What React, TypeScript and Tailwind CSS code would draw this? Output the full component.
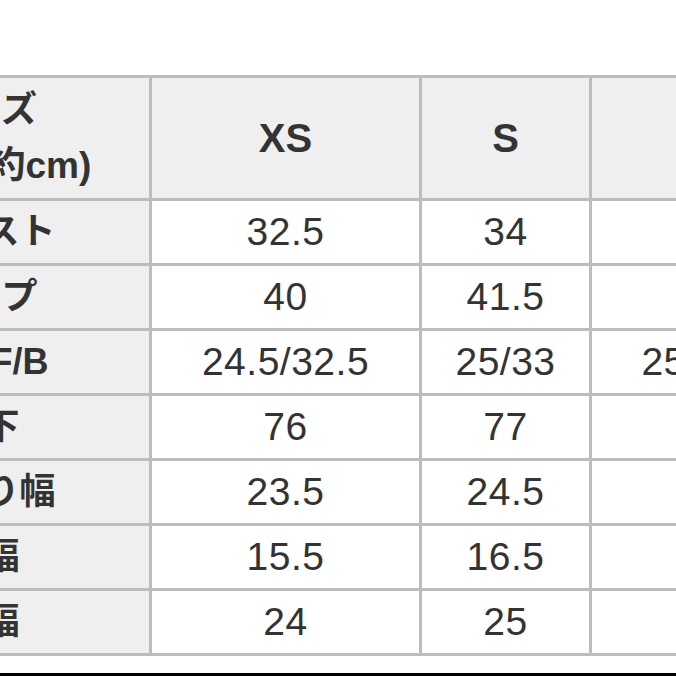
import { Fragment } from "react";

const sizes = ["XS", "S", "M"];

const rows: { label: string; values: string[] }[] = [
  { label: "ウエスト", values: ["32.5", "34", "35.5"] },
  { label: "ヒップ", values: ["40", "41.5", "43"] },
  { label: "股上F/B", values: ["24.5/32.5", "25/33", "25.5/33.5"] },
  { label: "股下", values: ["76", "77", "78"] },
  { label: "わたり幅", values: ["23.5", "24.5", "25.5"] },
  { label: "膝幅", values: ["15.5", "16.5", "17.5"] },
  { label: "裾幅", values: ["24", "25", "26"] },
];

const font = { fontFamily: '"Liberation Sans", "Noto Sans CJK JP", sans-serif' };

export default function App() {
  return (
    <div className="w-[676px] h-[676px] overflow-hidden bg-white pt-[75px]" style={font}>
      <div className="ml-[-182px] w-max grid grid-cols-[331px_267px_167px_266px] grid-rows-[120px_repeat(7,62px)] gap-[3px] bg-[#bdbdbd] border-y-[3px] border-[#bdbdbd] text-[#333]">
        <div className="bg-[#efefef] flex flex-col items-center justify-center font-bold text-[36px] leading-[56px]">
          <span>サイズ</span>
          <span className="ml-[14px] text-[37px]">(単位:約cm)</span>
        </div>
        {sizes.map((s) => (
          <div key={s} className="bg-[#efefef] flex items-center justify-center font-bold text-[40px]">
            {s}
          </div>
        ))}
        {rows.map((r) => (
          <Fragment key={r.label}>
            <div className="bg-[#efefef] flex items-center justify-center font-bold text-[36px]">
              {r.label}
            </div>
            {r.values.map((v, i) => (
              <div key={i} className="bg-white flex items-center justify-center text-[39px] tracking-[0.5px]">
                {v}
              </div>
            ))}
          </Fragment>
        ))}
      </div>
      <div className="mt-[17px] h-[3px] bg-black" />
    </div>
  );
}
